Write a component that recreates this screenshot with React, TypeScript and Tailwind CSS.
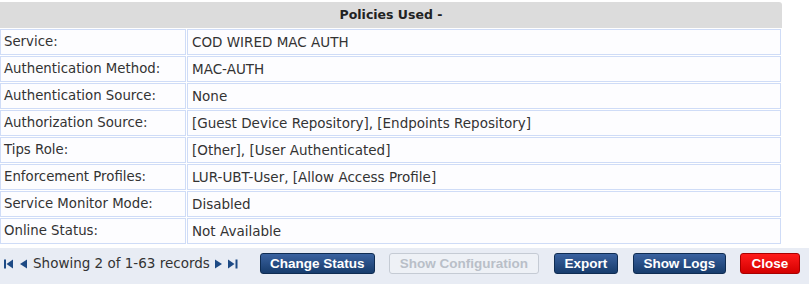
import React from 'react';

const rows: [string, string][] = [
  ['Service:', 'COD WIRED MAC AUTH'],
  ['Authentication Method:', 'MAC-AUTH'],
  ['Authentication Source:', 'None'],
  ['Authorization Source:', '[Guest Device Repository], [Endpoints Repository]'],
  ['Tips Role:', '[Other], [User Authenticated]'],
  ['Enforcement Profiles:', 'LUR-UBT-User, [Allow Access Profile]'],
  ['Service Monitor Mode:', 'Disabled'],
  ['Online Status:', 'Not Available'],
];

const btnBase =
  'h-[21px] px-0 rounded-[3px] whitespace-nowrap font-bold text-[13.5px] leading-none font-["Liberation_Sans",Arial,sans-serif]';
const btnBlue = `${btnBase} border border-[#0f2c52] bg-gradient-to-b from-[#3a62a0] to-[#173c6c] text-white`;

export default function App() {
  return (
    <div className="w-[809px] h-[284px] bg-white flex flex-col font-['DejaVu_Sans',Verdana,sans-serif] text-[13.3px] text-[#333]">
      <div className="w-[782px] mt-[2px]">
        <div className="h-[26px] bg-[#dcdcdc] rounded-tr-[3px] flex items-center justify-center font-bold text-[12.5px] text-[#222]">
          Policies Used -
        </div>
        <table className="w-[783px] border-separate border-spacing-[1px] -ml-[1px]">
          <tbody>
            {rows.map(([k, v]) => (
              <tr key={k}>
                <td className="w-[186px] h-[26px] border border-[#cfdcf7] bg-[#fdfdff] px-[3px] py-0 align-middle whitespace-nowrap">
                  {k}
                </td>
                <td className="h-[26px] border border-[#cfdcf7] bg-[#fdfdff] px-[4px] py-0 align-middle text-[13.5px]">
                  {v}
                </td>
              </tr>
            ))}
          </tbody>
        </table>
      </div>
      <div className="mt-auto h-[36px] bg-[#e8ecf4] flex items-start pt-[5px] pl-[4px]">
        <div className="flex items-center h-[21px]">
          <svg width="9" height="10" viewBox="0 0 9 10" className="mr-[7px]">
            <rect x="0" y="0.5" width="2" height="9" fill="#1d4a85" />
            <polygon points="9,0.5 2.5,5 9,9.5" fill="#1d4a85" />
          </svg>
          <svg width="7" height="10" viewBox="0 0 7 10" className="mr-[6px]">
            <polygon points="7,0.5 0,5 7,9.5" fill="#1d4a85" />
          </svg>
          <span className="text-[#333] text-[13.5px]">Showing 2 of 1-63 records</span>
          <svg width="7" height="10" viewBox="0 0 7 10" className="ml-[5px]">
            <polygon points="0,0.5 7,5 0,9.5" fill="#1d4a85" />
          </svg>
          <svg width="10" height="10" viewBox="0 0 10 10" className="ml-[6px]">
            <polygon points="0,0.5 6.5,5 0,9.5" fill="#1d4a85" />
            <rect x="7.5" y="0.5" width="2" height="9" fill="#1d4a85" />
          </svg>
        </div>
        <button className={`${btnBlue} ml-[22px] w-[115px]`}>Change Status</button>
        <button className={`${btnBase} ml-[14px] w-[150px] border border-[#c5cbd4] bg-[#eef1f6] text-[#b9bfc8]`}>
          Show Configuration
        </button>
        <button className={`${btnBlue} ml-[15px] w-[64px]`}>Export</button>
        <button className={`${btnBlue} ml-[15px] w-[93px]`}>Show Logs</button>
        <button className={`${btnBase} ml-[14px] w-[60px] border border-[#a80000] bg-gradient-to-b from-[#ff1a1a] to-[#d40000] text-white`}>
          Close
        </button>
      </div>
    </div>
  );
}
